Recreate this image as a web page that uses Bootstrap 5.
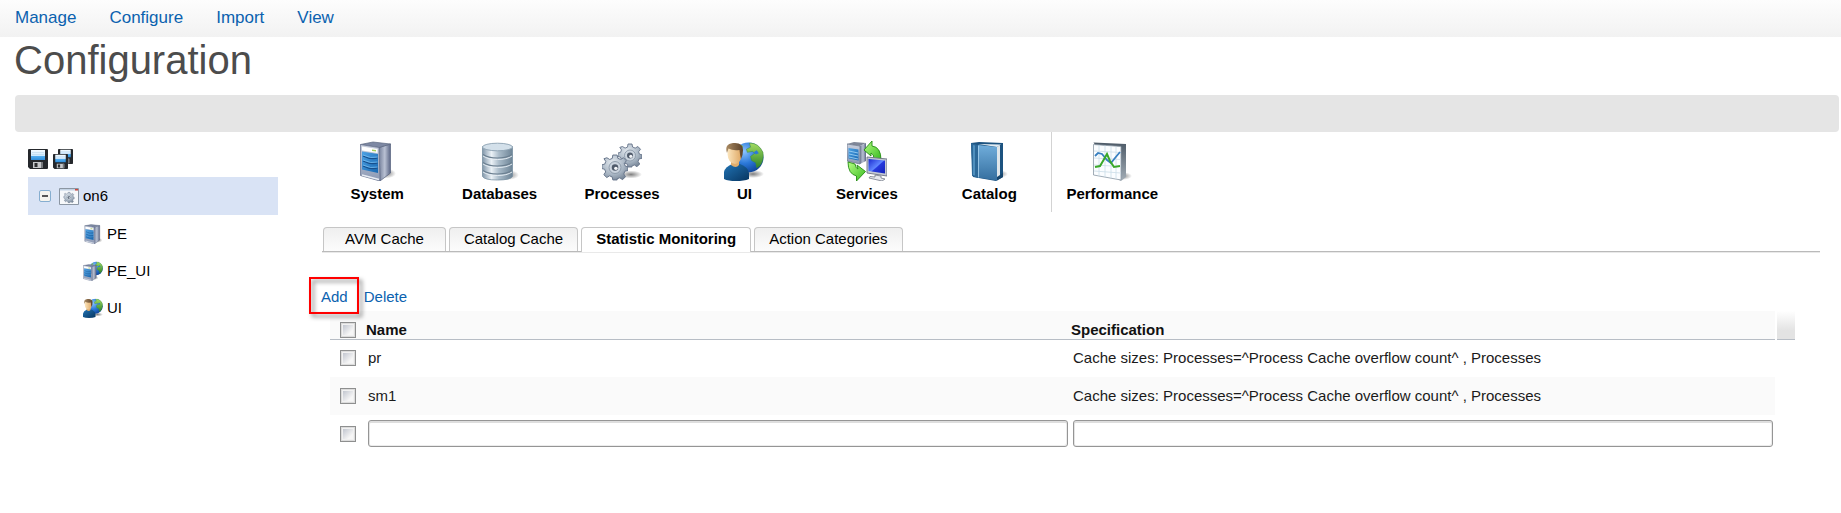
<!DOCTYPE html>
<html lang="en">
<head>
<meta charset="utf-8">
<meta name="viewport" content="width=device-width, initial-scale=1">
<title>Configuration</title>
<link href="https://cdn.jsdelivr.net/npm/bootstrap@5.3.0/dist/css/bootstrap.min.css" rel="stylesheet">
<style>
  body { font-family: "Liberation Sans", Arial, sans-serif; font-size: 15px; line-height: 20px; color: #000; background: #fff; }
  a { text-decoration: none; }
  .topnav { height: 37px; padding-left: 15px; gap: 33px; font-size: 17px; line-height: 36px; background: linear-gradient(#fdfdfd, #f2f2f2); }
  .topnav a, .actions button { color: #0b62af; }
  .page-title { font-size: 40px; line-height: 46px; color: #4c4c4c; margin: 0 0 12px 14px; }
  .banner { height: 37px; margin: 0 2px 0 15px; border-radius: 4px; background: #e5e5e5; }
  .workspace { padding: 0 21px 0 28px; gap: 38px; }
  .sidebar { flex: 0 0 250px; padding-top: 17px; }
  .file-tools { gap: 5px; margin-bottom: 8px; }
  .icon-btn, .plain-btn { border: 0; padding: 0; background: none; line-height: inherit; }
  .icon-btn svg { display: block; }
  .tree-row { height: 38px; gap: 4px; color: #000; }
  .tree-root { padding-left: 11px; background: #d9e3f5; }
  .tree-child { height: 37px; padding-left: 55px; }
  .toggle { margin-right: 4px; }
  .content { min-width: 0; }
  .modules { display: grid; grid-template-columns: repeat(7, 1fr); max-width: 857px; }
  .module { height: 80px; padding-top: 9px; gap: 3px; color: #000; font-weight: 700; }
  .module-split { border-left: 1px solid #d3d3d3; }
  .tabs { margin: 15px 0 0 6px; gap: 3px; padding-left: 1px; border-bottom: 1px solid #bababa; box-shadow: 0 1px #e9e9e9; }
  .tabs .nav-link { height: 24px; padding: 0 14px 2px; line-height: 20px; color: #000; border: 1px solid #c6c6c6; border-bottom: 0; border-radius: 4px 4px 0 0; background: linear-gradient(#efefef, #fcfcfc); margin: 0; }
  .tabs .nav-link.active { height: 25px; padding-bottom: 3px; margin-bottom: -1px; background: #fff; font-weight: 700; color: #000; }
  .tabs .tab-wide { padding: 0 21px 2px; }
  .actions { margin: 35px 0 4px 5px; gap: 16px; }
  .callout { position: relative; }
  .callout::after { content: ""; position: absolute; inset: -10px -11px -7px -12px; border: 2px solid #f00; filter: drop-shadow(3px 3px 2px rgba(0,0,0,.5)); pointer-events: none; }
  .grid-wrap { margin: 0 25px 0 14px; gap: 2px; }
  .grid-table { table-layout: fixed; width: 100%; color: #1a1a1a; border-collapse: collapse; }
  .grid-table th { height: 28px; padding: 10px 1px 0; line-height: 18px; background: #fafafa; border-bottom: 1px solid #b7bdc5; color: #111; }
  .grid-table td { height: 38px; padding: 0 2px 0 3px; vertical-align: middle; }
  .grid-table tbody tr:first-child td { height: 37px; }
  .grid-table .pick { width: 35px; padding-left: 10px; }
  .grid-table .shade td { background: #fafafa; }
  .grid-corner { flex: 0 0 18px; height: 29px; border-bottom: 1px solid #b7bdc5; background: linear-gradient(#fff, #e3e3e3 70%); }
  .tick { appearance: none; display: block; width: 16px; height: 16px; margin: 0; border: 1px solid #8e8f8f; background: linear-gradient(135deg, #c2c6cf, #f6f6f6 75%) content-box, #f1f1f1; padding: 2px; box-shadow: inset 0 0 0 1px #dcdcdc; }
  .tick:checked { background: #3874b8 content-box; }
  .cell-input { display: block; width: 100%; height: 27px; padding: 0 6px; border: 1px solid #959595; border-radius: 3px; background: #fff; box-shadow: inset 0 2px #dedede, inset 1px 0 #e4e4e4, inset -1px -1px #ececec; }
</style>
</head>
<body>
<svg width="0" height="0" class="position-absolute" aria-hidden="true">
  <defs>
    <linearGradient id="steel" x1="0" x2="1"><stop offset="0" stop-color="#75809b"/><stop offset=".5" stop-color="#b9c1d3"/><stop offset="1" stop-color="#5b6685"/></linearGradient>
    <linearGradient id="face" x1="0" y1="0" x2="0" y2="1"><stop offset="0" stop-color="#c9d0de"/><stop offset="1" stop-color="#8b98b3"/></linearGradient>
    <linearGradient id="blue" x1="0" y1="0" x2="1" y2="1"><stop offset="0" stop-color="#4ea2e4"/><stop offset="1" stop-color="#1767b1"/></linearGradient>
    <linearGradient id="drum" x1="0" x2="1"><stop offset="0" stop-color="#8297aa"/><stop offset=".3" stop-color="#eaf1f6"/><stop offset=".55" stop-color="#a9bbc9"/><stop offset="1" stop-color="#6d8496"/></linearGradient>
    <radialGradient id="gearFill" cx=".4" cy=".3" r=".8"><stop offset="0" stop-color="#e2e8ee"/><stop offset=".6" stop-color="#a8b5c3"/><stop offset="1" stop-color="#6f7e90"/></radialGradient>
    <radialGradient id="sea" cx=".35" cy=".3" r=".8"><stop offset="0" stop-color="#8cc4ff"/><stop offset=".5" stop-color="#2b78d8"/><stop offset="1" stop-color="#0a3c8e"/></radialGradient>
    <linearGradient id="land" x1="0" y1="0" x2="0" y2="1"><stop offset="0" stop-color="#a3dc62"/><stop offset="1" stop-color="#2f8428"/></linearGradient>
    <linearGradient id="skin" x1="0" x2="1"><stop offset="0" stop-color="#fbe5bd"/><stop offset="1" stop-color="#dfa763"/></linearGradient>
    <linearGradient id="hair" x1="0" x2="1"><stop offset="0" stop-color="#a98a63"/><stop offset="1" stop-color="#5c4128"/></linearGradient>
    <linearGradient id="shirt" x1="0" y1="0" x2="1" y2="1"><stop offset="0" stop-color="#2173b4"/><stop offset="1" stop-color="#073560"/></linearGradient>
    <linearGradient id="leaf" x1="0" y1="0" x2="1" y2="1"><stop offset="0" stop-color="#b8ff86"/><stop offset="1" stop-color="#35b91d"/></linearGradient>
    <linearGradient id="cover" x1="0" y1="0" x2="0" y2="1"><stop offset="0" stop-color="#70addb"/><stop offset="1" stop-color="#356f9f"/></linearGradient>
    <linearGradient id="lcd" x1="0" y1="0" x2="1" y2="1"><stop offset="0" stop-color="#1a2ad0"/><stop offset=".5" stop-color="#5f86ff"/><stop offset=".55" stop-color="#2639de"/><stop offset="1" stop-color="#1322b8"/></linearGradient>
    <linearGradient id="label" x1="0" y1="0" x2="0" y2="1"><stop offset="0" stop-color="#f4fbff"/><stop offset=".55" stop-color="#cfeaff"/><stop offset=".6" stop-color="#53aef0"/><stop offset="1" stop-color="#2f8ddb"/></linearGradient>
    <linearGradient id="edge" x1="0" y1="0" x2="0" y2="1"><stop offset="0" stop-color="#4e5b68"/><stop offset="1" stop-color="#a3adb6"/></linearGradient>
    <radialGradient id="cast"><stop offset="0" stop-color="#000" stop-opacity=".5"/><stop offset="1" stop-color="#000" stop-opacity="0"/></radialGradient>
  </defs>
  <symbol id="i-server" viewBox="0 0 40 40">
    <ellipse cx="29" cy="32.500" rx="10" ry="5" fill="url(#cast)"/>
    <path d="M22 6.500 33.500 3v29L23 40z" fill="url(#steel)" stroke="#56617c" stroke-width=".7"/>
    <path d="M3.500 3.500 16 1l17.500 2L22 6.500z" fill="#7d88a3" stroke="#5c6780" stroke-width=".7"/>
    <path d="M3.500 3.500 22 6.500 23 40 3.500 34.500z" fill="url(#face)" stroke="#6b7590" stroke-width=".8"/>
    <path d="M5 5.500 20.500 8v4L5 9.500z" fill="#fff"/><path d="M15 8.500l4 .6v1.500l-4-.6z" fill="#a8cf5b"/>
    <path d="M5 10.500 21 13v19L5 28.500z" fill="url(#blue)"/>
    <path d="M6 15q8 4 14.500 2M6 20q8 4 14.500 2M6 25q8 4 14.500 2" fill="none" stroke="#174f8c" stroke-width="1.200"/>
    <path d="M6 14q8 4 14.500 2M6 19q8 4 14.500 2M6 24q8 4 14.500 2" fill="none" stroke="#83c7f7" stroke-width=".7"/>
    <path d="M5 34 22 38.500" stroke="#e8ecf3" stroke-width="1.500"/>
  </symbol>
  <symbol id="i-database" viewBox="0 0 40 40">
    <ellipse cx="28" cy="34" rx="11" ry="5" fill="url(#cast)"/>
    <path d="M2.500 5.500v30q2 3.500 15 3.500t15-3.500v-30z" fill="url(#drum)" stroke="#7890a2" stroke-width=".8"/>
    <path d="M3 13.500q5 3.500 14.500 3.500T32 13.500M3 21.500Q8 25 17.500 25T32 21.500M3 29.500Q8 33 17.500 33T32 29.500" fill="none" stroke="#6b7f90" stroke-width="1.200"/>
    <path d="M3 15q5 3.500 14.500 3.500T32 15M3 23q5 3.500 14.500 3.500T32 23M3 31q5 3.500 14.500 3.500T32 31" fill="none" stroke="#e4ecf2" stroke-width="1"/>
    <ellipse cx="17.500" cy="6" rx="15" ry="3.800" fill="#d3e0ea" stroke="#8ba0b1" stroke-width=".9"/>
  </symbol>
  <symbol id="i-cog" viewBox="-12 -12 24 24">
    <path d="M-2-11.500h4l.6 3 2.600 1.100L7.900-9l2.600 2.800-1.900 2.500.9 2.400 2.500.6v3.500l-2.900.6-1 2.600 1.600 2.500-2.700 2.700-2.600-1.700-2.600 1L2 11.500h-4l-.6-2.800-2.500-1-2.500 1.600-2.700-2.700 1.700-2.500-1-2.500-2.500-.6v-3.500l2.600-.6 1-2.500-1.700-2.500L-7.500-9l2.600 1.600 2.400-1z" fill="url(#gearFill)" stroke="#66748a" stroke-width=".9"/>
    <circle r="5.500" fill="#cbd4de" stroke="#8492a2" stroke-width=".8"/><circle r="3" fill="#4f5a6a"/><circle cx=".8" cy=".8" r="1.600" fill="#f5f7fa"/>
  </symbol>
  <symbol id="i-gears" viewBox="0 0 40 40">
    <ellipse cx="29" cy="33.500" rx="11" ry="4" fill="url(#cast)"/>
    <use href="#i-cog" x="16" y="2" width="24" height="25"/>
    <use href="#i-cog" x="0" y="13" width="26" height="27"/>
  </symbol>
  <symbol id="i-globe" viewBox="0 0 30 30">
    <circle cx="15" cy="15" r="14.500" fill="url(#sea)"/>
    <path d="M16 1q9 0 13 9 1 8-3 13l-3 2-1-5-4-2-1-4 4-3-2-2-5 1-1-3 4-2z" fill="url(#land)" stroke="#3f8c35" stroke-width=".5"/>
    <path d="M20 10l3-2 2 3-3 1z" fill="#2b78d8"/><path d="M3 8l5-5 2 1-3 4z" fill="#7dc256"/>
  </symbol>
  <symbol id="i-user" viewBox="0 0 40 40">
    <ellipse cx="29" cy="33" rx="11" ry="4" fill="url(#cast)"/>
    <use href="#i-globe" x="9" y="1" width="31" height="31"/>
    <path d="M0 38V31q1-5 8-8h8q8 3 9 9v6q-5 2-13 2t-12-2z" fill="url(#shirt)"/>
    <path d="M7 18h8v6q-3 4-8 0z" fill="#e1ad6c"/>
    <path d="M4 7q0-4 6.500-4T17.500 9q1 13-6.500 14Q4 22 3.500 13z" fill="url(#skin)"/>
    <path d="M3 12Q0 3 9 2q10-1 10 7 0 5-2 9-1-3-1.500-9Q9 10 4.500 7.500z" fill="url(#hair)"/>
  </symbol>
  <symbol id="i-services" viewBox="0 0 40 40">
    <path d="M0 3 7 1l12 1-6 3z" fill="#7f8798"/>
    <path d="M13 5l6-3v18l-6 3z" fill="url(#steel)"/>
    <path d="M0 3l13 2v18L0 20z" fill="url(#face)" stroke="#707a8e" stroke-width=".8"/>
    <path d="M1.500 7l10 1.500v11L1.500 17.500z" fill="url(#blue)"/>
    <path d="M2 10l9 2M2 13l9 2M2 16l9 2" stroke="#a8d8f8" stroke-width=".8"/>
    <path d="M17 9 25 0v5q9 1 9 14l-7-1q0-5-3-6v3z" fill="url(#leaf)" stroke="#248c12" stroke-width=".9"/>
    <path d="M18.500 30.500 9.500 40v-5Q1 33 1 21l7 2q1 5 3 5l-1-4z" fill="url(#leaf)" stroke="#248c12" stroke-width=".9"/>
    <path d="M20 16l20 2v17l-20-3z" fill="#c4c9d4" stroke="#6d7383" stroke-width=".9"/>
    <path d="M21.500 18 38 19.500v13L21.500 30z" fill="url(#lcd)"/>
    <path d="M28 34l6 1v2l4 1-3 2-13-3 1-1.500 5 .5z" fill="#e6e8ed" stroke="#727886" stroke-width=".8"/>
  </symbol>
  <symbol id="i-book" viewBox="0 0 40 40">
    <ellipse cx="29" cy="33" rx="10" ry="4" fill="url(#cast)"/>
    <path d="M2 2 10 1l24 1v34l-7 4-23-4z" fill="#1d5380"/>
    <path d="M9 3l23 .5-4 2.500z" fill="#e3edf3"/>
    <path d="M28 6 31 4v31l-3 3z" fill="#dfe6ea"/>
    <path d="M2 2 9 4v33l-6-2z" fill="#2c6898"/><path d="M4 4l2 .5v30L4 34z" fill="#4f8fbd"/>
    <path d="M9 4l19 2v33.500L9 36.500z" fill="url(#cover)"/>
    <path d="M9.500 5v31.500" stroke="#a8d2ef" stroke-width=".8"/>
    <path d="M28 39.500V36l6-4v4z" fill="#17466e"/>
  </symbol>
  <symbol id="i-chart" viewBox="0 0 40 40">
    <ellipse cx="30" cy="35" rx="10" ry="4" fill="url(#cast)"/>
    <path d="M1.500 1.500 34 3v33l-5 4-2-1z" fill="url(#edge)"/>
    <path d="M1.500 3.500 29 5.500V39L1.500 34z" fill="#fbfdff" stroke="#8a98a5" stroke-width=".8"/>
    <path d="M7 4v31M13 4.500v31.500M19 5v32M24 5.500v32.500M2 10l27 1.500M2 17l27 1.500M2 24l27 1.500M2 30l27 2" stroke="#cbdde8" stroke-width=".8"/>
    <path d="M3 15l3-3 4 1 5 6 4 3 4-5 5-6" fill="none" stroke="#377fc0" stroke-width="1.800"/>
    <path d="M3 26l5-1 3-5 4-7 3 7 4 6 6-1" fill="none" stroke="#3aa829" stroke-width="2"/>
  </symbol>
  <symbol id="i-disk" viewBox="0 0 20 20">
    <path d="M1 0h18q1 0 1 1v18q0 1-1 1H2l-2-2V1q0-1 1-1z" fill="#25282c"/>
    <path d="M3 1h14v10H3z" fill="url(#label)"/><path d="M4 3.500h12M4 5.500h12" stroke="#b9d5e8" stroke-width=".6"/>
    <path d="M5 13h10v6H5z" fill="#c5c7ca"/><path d="M6.500 14h3v4h-3z" fill="#2b2d30"/><path d="M13 13h2v6h-2z" fill="#777a7e"/>
  </symbol>
  <symbol id="i-host" viewBox="0 0 20 17">
    <path d="M.5.500h19v16H.5z" fill="#f7f9fb" stroke="#8b96a3"/><path d="M1 1h18v1.500H1z" fill="#c3d3e5"/><path d="M16 1h3v1.500h-3z" fill="#d0463c"/>
    <use href="#i-cog" x="4.500" y="3.500" width="11" height="12"/>
  </symbol>
</svg>

<nav class="topnav d-flex" aria-label="Main">
  <a href="#">Manage</a><a href="#">Configure</a><a href="#">Import</a><a href="#">View</a>
</nav>
<h1 class="page-title fw-normal">Configuration</h1>
<div class="banner"></div>

<div class="workspace d-flex align-items-start">
  <aside class="sidebar">
    <div class="file-tools d-flex">
      <button class="icon-btn" type="button" aria-label="Save"><svg width="20" height="20"><use href="#i-disk"/></svg></button>
      <button class="icon-btn" type="button" aria-label="Save all"><svg width="20" height="20" viewBox="0 0 20 20"><use href="#i-disk" x="5" width="15" height="15"/><use href="#i-disk" y="5" width="15" height="15"/></svg></button>
    </div>
    <div class="tree-row tree-root d-flex align-items-center">
      <button class="icon-btn toggle" type="button" aria-label="Collapse"><svg width="12" height="12"><rect x=".5" y=".5" width="11" height="11" rx="1.500" fill="#f6f4ee" stroke="#86aed0"/><path d="M3 6h6" stroke="#222" stroke-width="1.500"/></svg></button>
      <svg width="20" height="17"><use href="#i-host"/></svg>
      <a class="text-black" href="#">on6</a>
    </div>
    <a class="tree-row tree-child d-flex align-items-center" href="#"><svg width="20" height="20"><use href="#i-server"/></svg>PE</a>
    <a class="tree-row tree-child d-flex align-items-center" href="#"><svg width="20" height="20" viewBox="0 0 20 20"><use href="#i-globe" x="6" y="0" width="14" height="15"/><use href="#i-server" x="-1" y="3" width="17" height="17"/></svg>PE_UI</a>
    <a class="tree-row tree-child d-flex align-items-center" href="#"><svg width="20" height="20"><use href="#i-user"/></svg>UI</a>
  </aside>

  <main class="content flex-grow-1">
    <div class="modules">
      <a class="module d-flex flex-column align-items-center" href="#"><svg width="40" height="40"><use href="#i-server"/></svg>System</a>
      <a class="module d-flex flex-column align-items-center" href="#"><svg width="40" height="40"><use href="#i-database"/></svg>Databases</a>
      <a class="module d-flex flex-column align-items-center" href="#"><svg width="40" height="40"><use href="#i-gears"/></svg>Processes</a>
      <a class="module d-flex flex-column align-items-center" href="#"><svg width="40" height="40"><use href="#i-user"/></svg>UI</a>
      <a class="module d-flex flex-column align-items-center" href="#"><svg width="40" height="40"><use href="#i-services"/></svg>Services</a>
      <a class="module d-flex flex-column align-items-center" href="#"><svg width="40" height="40"><use href="#i-book"/></svg>Catalog</a>
      <a class="module module-split d-flex flex-column align-items-center" href="#"><svg width="40" height="40"><use href="#i-chart"/></svg>Performance</a>
    </div>

    <div class="tabs nav" role="tablist">
      <button class="nav-link tab-wide" type="button" role="tab">AVM Cache</button>
      <button class="nav-link" type="button" role="tab">Catalog Cache</button>
      <button class="nav-link active" type="button" role="tab" aria-selected="true">Statistic Monitoring</button>
      <button class="nav-link" type="button" role="tab">Action Categories</button>
    </div>

    <div class="actions d-flex">
      <button class="plain-btn callout" type="button">Add</button>
      <button class="plain-btn" type="button">Delete</button>
    </div>

    <div class="grid-wrap d-flex align-items-start">
      <table class="grid-table">
        <thead>
          <tr><th class="pick"><input class="tick" type="checkbox" aria-label="Select all"></th><th>Name</th><th>Specification</th></tr>
        </thead>
        <tbody>
          <tr><td class="pick"><input class="tick" type="checkbox" aria-label="Select pr"></td><td>pr</td><td>Cache sizes: Processes=^Process Cache overflow count^ , Processes</td></tr>
          <tr class="shade"><td class="pick"><input class="tick" type="checkbox" aria-label="Select sm1"></td><td>sm1</td><td>Cache sizes: Processes=^Process Cache overflow count^ , Processes</td></tr>
          <tr><td class="pick"><input class="tick" type="checkbox" aria-label="Select new row"></td><td><input class="cell-input" type="text" aria-label="Name"></td><td><input class="cell-input" type="text" aria-label="Specification"></td></tr>
        </tbody>
      </table>
      <div class="grid-corner"></div>
    </div>
  </main>
</div>
<script src="https://cdn.jsdelivr.net/npm/bootstrap@5.3.0/dist/js/bootstrap.bundle.min.js"></script>
</body>
</html>
